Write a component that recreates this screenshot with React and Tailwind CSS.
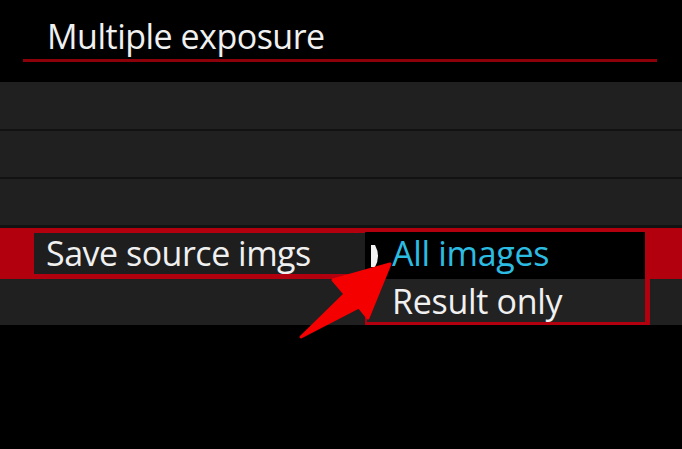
const font = { fontFamily: '"Open Sans", "Noto Sans", sans-serif' };

const Row = ({ className = "" }) => <div className={`bg-[#202020] ${className}`} />;

// white marker in front of the highlighted option
const Cursor = () => (
  <svg width="12" height="24" viewBox="0 0 12 24" className="shrink-0">
    <path d="M1 1 L5 1 Q11 12 5 23 L1 23 Z" fill="#f2f2f2" />
  </svg>
);

const Arrow = () => (
  <svg
    className="absolute left-0 top-0 pointer-events-none"
    width="682"
    height="449"
    viewBox="0 0 682 449"
  >
    <polygon
      points="390,264 333,280 345,294 301,337 359,307 368,318"
      fill="#f40000"
      stroke="#f40000"
      strokeWidth="3"
      strokeLinejoin="round"
    />
  </svg>
);

const App = () => {
  return (
    <div className="relative w-[682px] h-[449px] bg-black overflow-hidden" style={font}>
      <div className="h-[82px] pt-[19px]">
        <h1 className="pl-[47px] text-[34px] leading-[34px] text-[#f0f0f0] tracking-[-0.5px]">
          Multiple exposure
        </h1>
        <div className="mt-[6px] ml-[23px] w-[634px] h-[3px] bg-[#8c0009]" />
      </div>

      <div className="flex flex-col bg-[#121212]">
        <Row className="h-[47px]" />
        <Row className="h-[46px] mt-[2px]" />
        <Row className="h-[46px] mt-[2px]" />
        <div className="mt-[3px] h-[51px] bg-[#b3000f] pl-[34px] pt-[5px]">
          <div className="w-[331px] h-[41px] bg-[#1e1e1e] flex items-center pl-[12px]">
            <span className="text-[34px] leading-[34px] text-[#f0f0f0] tracking-[-0.5px] -mt-[1px]">
              Save source imgs
            </span>
          </div>
        </div>
        <Row className="h-[46px]" />
      </div>

      <div className="absolute left-[365px] top-[228px] w-[285px] border-t-[4px] border-r-[5px] border-b-[3px] border-[#b3000f]">
        <div className="h-[47px] bg-black flex items-center pl-[5px]">
          <Cursor />
          <span className="ml-[10px] text-[34px] leading-[34px] text-[#2cbce2] tracking-[-0.3px] -mt-[5px]">
            All images
          </span>
        </div>
        <div className="h-[43px] bg-[#222222] border-l-[2px] border-[#b3000f] flex items-center pl-[25px]">
          <span className="text-[34px] leading-[34px] text-[#f0f0f0] tracking-[-0.3px] mt-[1px]">
            Result only
          </span>
        </div>
      </div>

      <Arrow />
    </div>
  );
};

export default App;
